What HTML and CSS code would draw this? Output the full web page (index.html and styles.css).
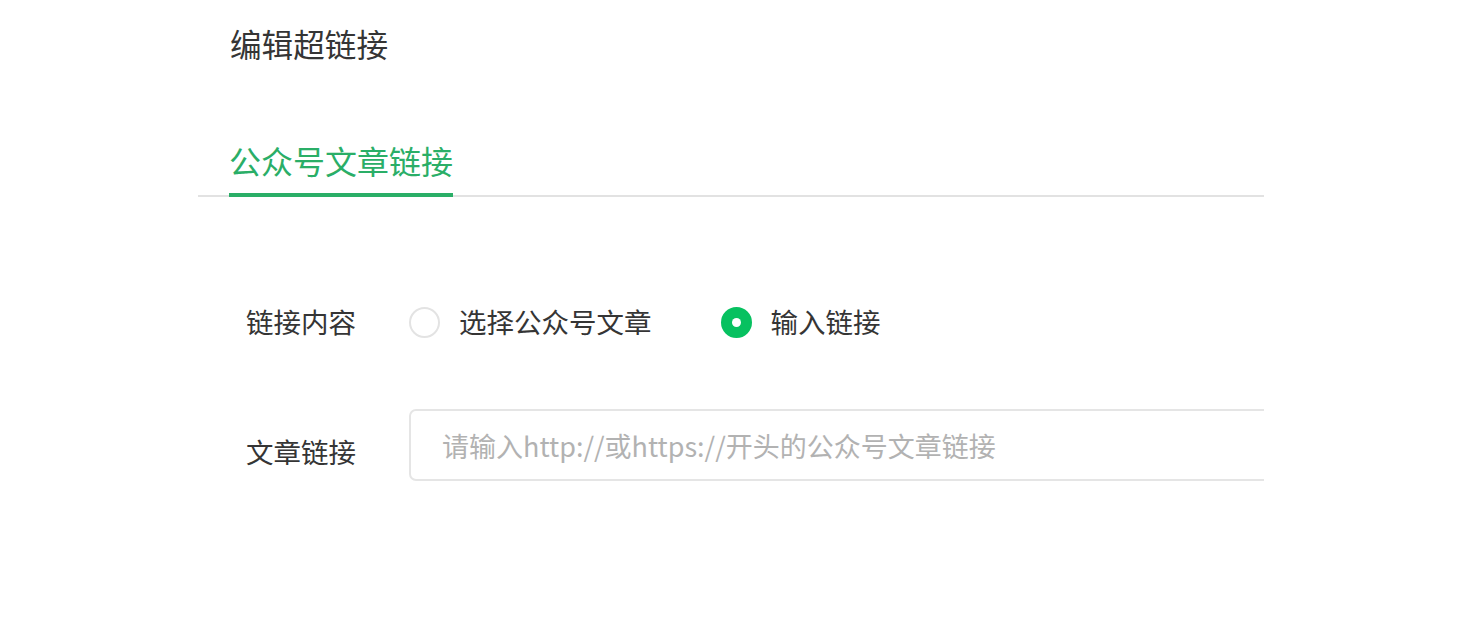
FILE: index.html
```html
<!DOCTYPE html>
<html lang="zh-CN">
<head>
<meta charset="utf-8">
<title>编辑超链接</title>
<link rel="stylesheet" href="styles.css">
</head>
<body>
<div class="dialog">
  <div class="title">编辑超链接</div>
  <div class="tabs">
    <div class="tab active">公众号文章链接</div>
  </div>
  <div class="form">
    <div class="row row-radio">
      <div class="label">链接内容</div>
      <div class="field radios">
        <label class="radio"><span class="dot"></span><span>选择公众号文章</span></label>
        <label class="radio checked"><span class="dot"></span><span>输入链接</span></label>
      </div>
    </div>
    <div class="row row-input">
      <div class="label label-input">文章链接</div>
      <div class="field">
        <input class="text-input" type="text" placeholder="请输入http://或https://开头的公众号文章链接">
      </div>
    </div>
  </div>
</div>
</body>
</html>
```

FILE: styles.css
```css
html, body {
  margin: 0;
  padding: 0;
  background: #ffffff;
}
body {
  font-family: "Noto Sans CJK SC", "Noto Sans", sans-serif;
  color: #353535;
}
.dialog {
  margin-left: 198px;
  width: 1066px;
  overflow: hidden;
}
.title {
  padding-left: 32px;
  margin-top: 21px;
  font-size: 31.6px;
  line-height: 44px;
  color: #353535;
}
.tabs {
  display: flex;
  margin-top: 73px;
  padding-left: 31px;
  border-bottom: 2px solid #e2e2e2;
}
.tab {
  font-size: 32px;
  line-height: 44px;
  padding-bottom: 11px;
  margin-bottom: -2px;
  color: #2aae67;
  border-bottom: 4px solid #2aae67;
}
.form {
  padding-top: 102px;
}
.row {
  display: flex;
  align-items: center;
}
.label {
  width: 163px;
  padding-left: 48px;
  flex: none;
  font-size: 27.5px;
  line-height: 44px;
  color: #353535;
}
.field {
  flex: 1;
  display: flex;
  align-items: center;
}
.radios {
  gap: 69px;
}
.radio {
  display: flex;
  align-items: center;
  gap: 19px;
  font-size: 27.5px;
  line-height: 44px;
  color: #353535;
}
.dot {
  box-sizing: border-box;
  width: 31px;
  height: 31px;
  border-radius: 50%;
  border: 2px solid #e3e3e3;
  background: #fff;
  margin-top: 2px;
  position: relative;
}
.radio.checked .dot {
  border-color: #07c160;
  background: #07c160;
}
.radio.checked .dot::after {
  content: "";
  position: absolute;
  left: 50%;
  top: 50%;
  width: 9px;
  height: 9px;
  margin: -4.5px 0 0 -4.5px;
  border-radius: 50%;
  background: #fff;
}
.row-input {
  margin-top: 66px;
  align-items: flex-start;
}
.label-input {
  padding-top: 20px;
}
.text-input {
  box-sizing: border-box;
  width: 1000px;
  height: 72px;
  border: 2px solid #e5e5e5;
  border-radius: 7px;
  padding: 0 0 0 31px;
  font-family: "Noto Sans CJK SC", "Noto Sans", sans-serif;
  font-size: 27px;
  color: #353535;
  outline: none;
  background: #fff;
}
.text-input::placeholder {
  color: #b2b2b2;
}
```
